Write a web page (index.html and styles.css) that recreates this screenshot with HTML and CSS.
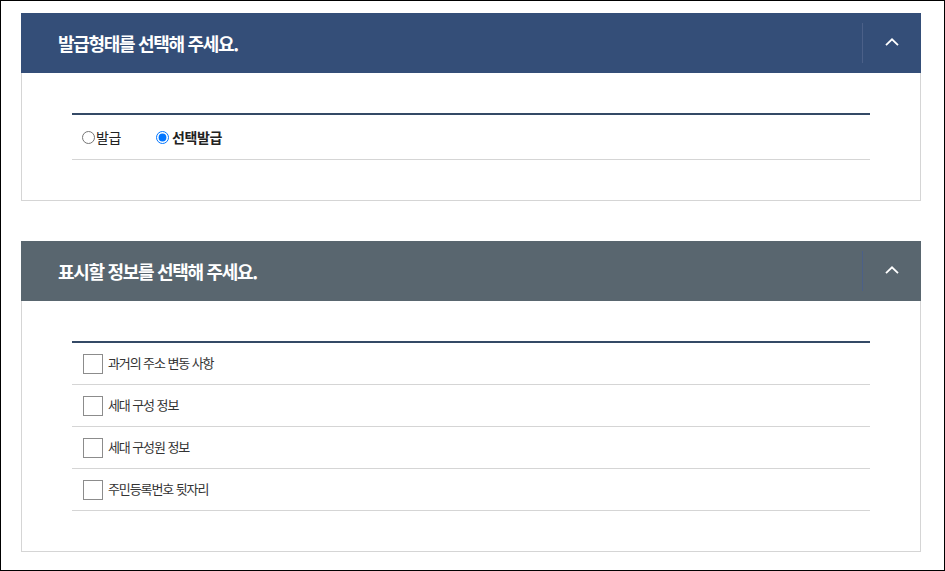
FILE: index.html
```html
<!DOCTYPE html>
<html lang="ko">
<head>
<meta charset="utf-8">
<title>발급형태 선택</title>
<link rel="stylesheet" href="styles.css">
</head>
<body>
<div class="page">
  <section class="panel">
    <div class="panel-head navy">
      <h2 class="panel-title">발급형태를 선택해 주세요.</h2>
      <button class="toggle" type="button" aria-label="접기">
        <svg width="14" height="8" viewBox="0 0 14 8"><path d="M1 7.2 L7 1.3 L13 7.2" fill="none" stroke="#fff" stroke-width="1.8"/></svg>
      </button>
    </div>
    <div class="panel-body">
      <div class="list">
        <div class="row radio-row">
          <label class="radio"><input type="radio" name="kind"><span>발급</span></label>
          <label class="radio on"><input type="radio" name="kind" checked><span>선택발급</span></label>
        </div>
      </div>
    </div>
  </section>

  <section class="panel">
    <div class="panel-head slate">
      <h2 class="panel-title">표시할 정보를 선택해 주세요.</h2>
      <button class="toggle" type="button" aria-label="접기">
        <svg width="14" height="8" viewBox="0 0 14 8"><path d="M1 7.2 L7 1.3 L13 7.2" fill="none" stroke="#fff" stroke-width="1.8"/></svg>
      </button>
    </div>
    <div class="panel-body">
      <div class="list">
        <label class="row check-row"><span class="box"></span><span class="check-text">과거의 주소 변동 사항</span></label>
        <label class="row check-row"><span class="box"></span><span class="check-text">세대 구성 정보</span></label>
        <label class="row check-row"><span class="box"></span><span class="check-text">세대 구성원 정보</span></label>
        <label class="row check-row"><span class="box"></span><span class="check-text">주민등록번호 뒷자리</span></label>
      </div>
    </div>
  </section>
</div>
</body>
</html>
```
FILE: styles.css
```css
* { box-sizing: border-box; }
html, body { margin: 0; padding: 0; background: #fff; }
body {
  font-family: "Noto Sans CJK KR", "Noto Sans", sans-serif;
  color: #222;
}
.page {
  width: 945px;
  height: 571px;
  border: 1px solid #000;
  padding: 12px 23px 0 20px;
  display: flex;
  flex-direction: column;
  gap: 40px;
}
.panel { width: 900px; }
.panel-head {
  height: 60px;
  display: flex;
  align-items: center;
  padding-left: 37px;
}
.navy { background: #344e78; }
.slate { background: #59666f; }
.panel-title {
  flex: 1;
  margin: 0;
  color: #fff;
  font-size: 18px;
  font-weight: 700;
  letter-spacing: -1.3px;
  line-height: 1;
}
.toggle {
  width: 59px;
  height: 40px;
  border: 0;
  border-left: 1px solid #4b6088;
  background: transparent;
  padding: 0;
  display: flex;
  align-items: center;
  justify-content: center;
  cursor: pointer;
}
.toggle svg { display: block; margin-top: -2px; }
.panel-body {
  border: 1px solid #d5d5d5;
  border-top: 0;
  padding: 40px 50px;
}
.list { border-top: 2px solid #344a66; }
.row {
  display: flex;
  align-items: center;
  border-bottom: 1px solid #d5d5d5;
}
.radio-row {
  height: 45px;
  padding-left: 10px;
  gap: 35px;
}
.radio {
  display: flex;
  align-items: center;
  font-size: 14px;
  letter-spacing: -0.4px;
  color: #222;
}
.radio input {
  width: 13px;
  height: 13px;
  margin: 0 1px 0 0;
}
.radio.on input { margin-right: 3px; }
.radio.on span { font-weight: 700; }
.check-row {
  height: 42px;
  padding-left: 11px;
}
.box {
  width: 20px;
  height: 20px;
  border: 1px solid #8c8c8c;
  background: #fff;
  margin-right: 5px;
}
.check-text {
  font-size: 13px;
  letter-spacing: -1.1px;
  color: #333;
  line-height: 1;
  margin-top: -3px;
}
```
